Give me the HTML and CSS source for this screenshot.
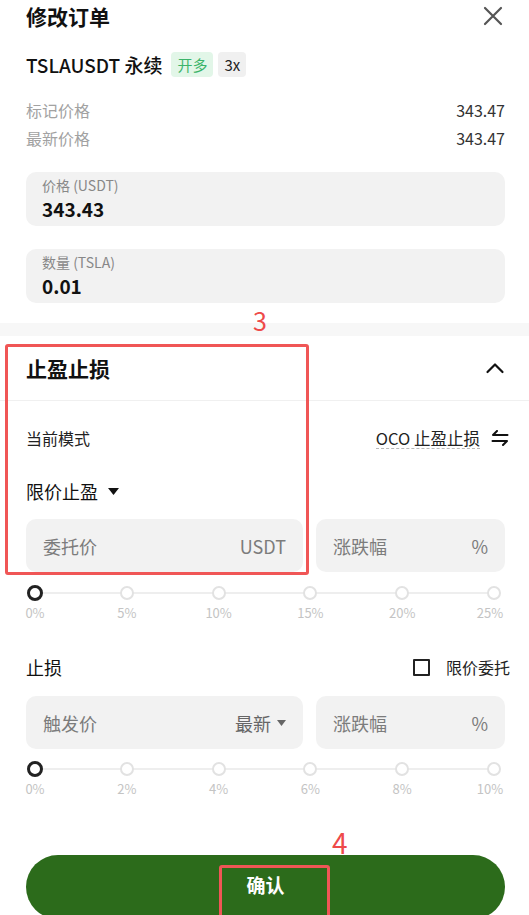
FILE: index.html
```html
<!DOCTYPE html>
<html lang="zh-CN">
<head>
  <meta charset="UTF-8" />
  <meta name="viewport" content="width=device-width, initial-scale=1" />
  <title>修改订单</title>
  <link rel="stylesheet" href="styles.css">
</head>
<body>
<div class="page">

  <div class="sheet">
    <header class="top-bar">
      <h1>修改订单</h1>
      <button class="close-btn" aria-label="关闭">
        <svg width="22" height="22" viewBox="0 0 22 22"><path d="M3 3L19 19M19 3L3 19" stroke="#555" stroke-width="2.2" stroke-linecap="round"/></svg>
      </button>
    </header>

    <div class="product">
      <span class="symbol">TSLAUSDT 永续</span>
      <span class="tag tag-long">开多</span>
      <span class="tag">3x</span>
    </div>

    <div class="info-row first"><span>标记价格</span><span class="num">343.47</span></div>
    <div class="info-row"><span>最新价格</span><span class="num">343.47</span></div>

    <div class="field">
      <div class="field-label">价格 (USDT)</div>
      <div class="field-value">343.43</div>
    </div>
    <div class="field field-qty">
      <div class="field-label">数量 (TSLA)</div>
      <div class="field-value">0.01</div>
    </div>
  </div>

  <div class="band"></div>

  <section class="tpsl">
    <div class="tpsl-head">
      <h2>止盈止损</h2>
      <svg width="20" height="20" viewBox="0 0 20 20"><path d="M2.5 14L10 6.5L17.5 14" fill="none" stroke="#111" stroke-width="2.2" stroke-linecap="round" stroke-linejoin="round"/></svg>
    </div>

    <div class="tpsl-body">
      <div class="row mode-row">
        <span>当前模式</span>
        <span class="mode-switch">
          <span class="dashed">OCO 止盈止损</span>
          <svg width="18" height="16" viewBox="0 0 18 16"><path d="M16.5 5H2l4-4M1.5 11H16l-4 4" fill="none" stroke="#111" stroke-width="2" stroke-linecap="round" stroke-linejoin="round"/></svg>
        </span>
      </div>

      <div class="row order-type">
        <span class="select">限价止盈
          <svg width="11" height="7" viewBox="0 0 11 7"><path d="M0 0H11L5.5 7Z" fill="#111"/></svg>
        </span>
      </div>

      <div class="inputs">
        <div class="input"><span>委托价</span><span>USDT</span></div>
        <div class="input"><span>涨跌幅</span><span>%</span></div>
      </div>

      <div class="slider">
        <div class="stop active"><i></i><span>0%</span></div>
        <div class="stop"><i></i><span>5%</span></div>
        <div class="stop"><i></i><span>10%</span></div>
        <div class="stop"><i></i><span>15%</span></div>
        <div class="stop"><i></i><span>20%</span></div>
        <div class="stop"><i></i><span>25%</span></div>
      </div>

      <div class="row sl-row">
        <span>止损</span>
        <label class="check"><span class="box"></span>限价委托</label>
      </div>

      <div class="inputs inputs-sl">
        <div class="input"><span>触发价</span><span class="latest">最新
          <svg width="9" height="6" viewBox="0 0 9 6"><path d="M0 0H9L4.5 6Z" fill="#666"/></svg></span></div>
        <div class="input"><span>涨跌幅</span><span>%</span></div>
      </div>

      <div class="slider slider-sl">
        <div class="stop active"><i></i><span>0%</span></div>
        <div class="stop"><i></i><span>2%</span></div>
        <div class="stop"><i></i><span>4%</span></div>
        <div class="stop"><i></i><span>6%</span></div>
        <div class="stop"><i></i><span>8%</span></div>
        <div class="stop"><i></i><span>10%</span></div>
      </div>
    </div>
  </section>

  <div class="footer">
    <button class="confirm">确认</button>
  </div>

  <!-- annotations -->
  <div class="mark mark-num num-3">3</div>
  <div class="mark mark-box box-tpsl"></div>
  <div class="mark mark-num num-4">4</div>
  <div class="mark mark-box box-confirm"></div>

</div>
</body>
</html>
```

FILE: styles.css
```css
* {
  box-sizing: border-box;
}
body {
  margin: 0;
  font-family: "Noto Sans CJK SC", "Noto Sans", sans-serif;
  color: #111;
  background: #fff;
}
.page {
  position: relative;
  height: 915px;
  overflow: hidden;
}
.sheet {
  padding: 0 24px 0 26px;
}

.top-bar {
  height: 32px;
  display: flex;
  align-items: center;
  justify-content: space-between;
}
.top-bar h1 {
  margin: 0;
  font-size: 21px;
  font-weight: 700;
  line-height: 32px;
}
.close-btn {
  width: 24px;
  height: 24px;
  padding: 0;
  border: none;
  background: none;
  display: flex;
  align-items: center;
  justify-content: center;
}

.product {
  margin-top: 16px;
  height: 32px;
  display: flex;
  align-items: center;
}
.symbol {
  font-size: 19px;
  font-weight: 500;
  margin-right: 9px;
}
.tag {
  height: 25px;
  line-height: 25px;
  padding: 0 6px;
  border-radius: 4px;
  font-size: 15px;
  background: #f0f0f0;
  color: #222;
  margin-right: 5px;
}
.tag-long {
  background: #e2f6e8;
  color: #3cb46a;
}

.info-row {
  display: flex;
  justify-content: space-between;
  line-height: 28px;
  font-size: 16px;
  color: #a2a2a2;
}
.info-row.first {
  margin-top: 16px;
}
.info-row .num {
  color: #333;
}

.field {
  margin-top: 20px;
  height: 54px;
  padding: 3px 16px;
  background: #f2f2f2;
  border-radius: 10px;
}
.field-qty {
  margin-top: 23px;
}
.field-label {
  font-size: 14px;
  line-height: 20px;
  color: #888;
}
.field-value {
  font-size: 19px;
  line-height: 28px;
  font-weight: 700;
}

.band {
  margin-top: 20px;
  height: 13px;
  background: #f7f7f7;
}

.tpsl-head {
  height: 65px;
  padding: 0 24px 0 26px;
  border-bottom: 1px solid #f0f0f0;
  display: flex;
  align-items: center;
  justify-content: space-between;
}
.tpsl-head h2 {
  margin: 0;
  font-size: 21px;
  font-weight: 700;
}
.tpsl-body {
  padding: 19px 24px 0 26px;
}
.row {
  height: 36px;
  display: flex;
  align-items: center;
  justify-content: space-between;
}
.mode-row {
  font-size: 16px;
  color: #222;
}
.mode-switch {
  display: flex;
  align-items: center;
  gap: 11px;
  margin-right: -4px;
  font-size: 16.5px;
}
.mode-switch .dashed {
  border-bottom: 1px dashed #b8b8b8;
  line-height: 20px;
}
.order-type {
  margin-top: 17px;
  font-size: 18px;
}
.select {
  display: flex;
  align-items: center;
  gap: 10px;
}

.inputs {
  margin-top: 10px;
  display: grid;
  grid-template-columns: 277px 1fr;
  gap: 13px;
}
.inputs-sl {
  margin-top: 11px;
}
.input {
  height: 53px;
  padding: 0 17px 0 17px;
  background: #f2f2f2;
  border-radius: 10px;
  display: flex;
  align-items: center;
  justify-content: space-between;
  font-size: 18px;
  color: #7c7c7c;
}
.latest {
  display: flex;
  align-items: center;
  gap: 6px;
  color: #666;
}

.slider {
  position: relative;
  margin-top: 13px;
  padding: 0 3px 0 1px;
  display: flex;
  justify-content: space-between;
}
.slider-sl {
  margin-top: 12px;
}
.slider::before {
  content: "";
  position: absolute;
  left: 10px;
  right: 10px;
  top: 7px;
  height: 2px;
  background: #eeeeee;
}
.stop {
  position: relative;
  width: 16px;
  display: flex;
  flex-direction: column;
  align-items: center;
}
.stop i {
  width: 14px;
  height: 14px;
  margin: 1px 0;
  border: 2px solid #e2e2e2;
  border-radius: 50%;
  background: #fff;
}
.stop.active i {
  width: 16px;
  height: 16px;
  margin: 0;
  border: 3px solid #222;
}
.stop span {
  margin-top: 4px;
  font-size: 13px;
  line-height: 16px;
  color: #c4c4c4;
  white-space: nowrap;
}
.stop:last-child span {
  margin-right: 8px;
}

.sl-row {
  margin-top: 28px;
  font-size: 18px;
}
.check {
  display: flex;
  align-items: center;
  gap: 16px;
  font-size: 16px;
  color: #222;
  margin-right: -5px;
}
.check .box {
  width: 17px;
  height: 17px;
  border: 2px solid #222;
  border-radius: 1px;
}

.footer {
  padding: 58px 24px 0 26px;
}
.confirm {
  width: 100%;
  height: 64px;
  border: none;
  border-radius: 32px;
  background: #2c6b1b;
  color: #fff;
  font-family: inherit;
  font-size: 19px;
  font-weight: 700;
  padding-bottom: 0;
  display: flex;
  justify-content: center;
  padding-top: 16px;
}

/* annotations drawn over the screenshot */
.mark {
  position: absolute;
}
.mark-num {
  color: #ee4a4a;
  line-height: 1;
}
.num-3 {
  left: 253px;
  top: 308px;
  font-size: 25px;
}
.num-4 {
  left: 332px;
  top: 828px;
  font-size: 28px;
}
.mark-box {
  border: 3px solid #f05656;
  border-radius: 3px;
}
.box-tpsl {
  left: 5px;
  top: 344px;
  width: 304px;
  height: 231px;
}
.box-confirm {
  left: 219px;
  top: 865px;
  width: 111px;
  height: 60px;
}
```
